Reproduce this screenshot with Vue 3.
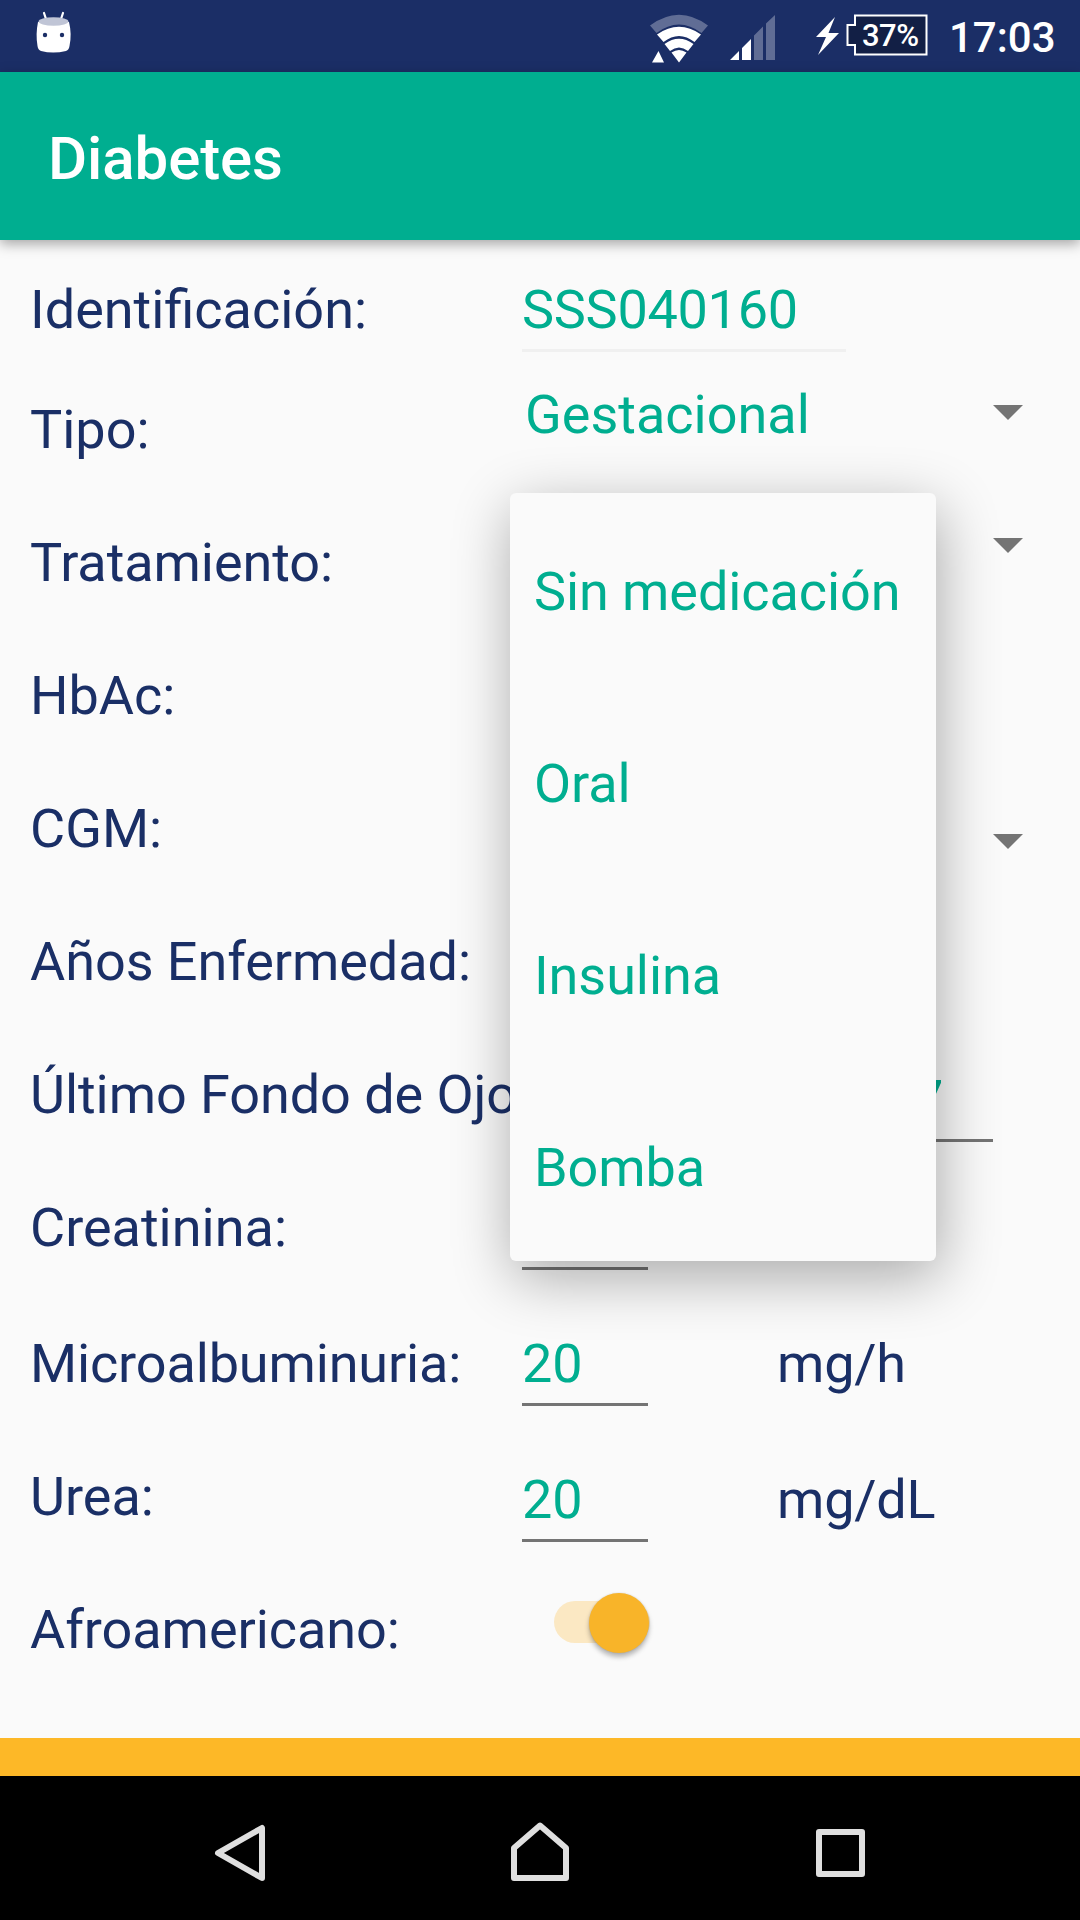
<script setup>
const rows = [
  { id: 'ident', label: 'Identificación:', value: 'SSS040160', type: 'input' },
  { id: 'tipo', label: 'Tipo:', value: 'Gestacional', type: 'select' },
  { id: 'trat', label: 'Tratamiento:', value: '', type: 'select' },
  { id: 'hbac', label: 'HbAc:', type: 'none' },
  { id: 'cgm', label: 'CGM:', value: '', type: 'select' },
  { id: 'anos', label: 'Años Enfermedad:', type: 'none' },
  { id: 'ojo', label: 'Último Fondo de Ojo:', value: '01/01/2017', type: 'input' },
  { id: 'crea', label: 'Creatinina:', value: '', type: 'input' },
  { id: 'micro', label: 'Microalbuminuria:', value: '20', unit: 'mg/h', type: 'input' },
  { id: 'urea', label: 'Urea:', value: '20', unit: 'mg/dL', type: 'input' },
  { id: 'afro', label: 'Afroamericano:', type: 'switch' },
]
const options = ['Sin medicación', 'Oral', 'Insulina', 'Bomba']
</script>

<template>
  <div class="screen">
    <header class="status">
      <svg class="cupcake" width="40" height="48" viewBox="0 0 40 48">
        <path d="M11 3l3 9M30 3l-3 9" stroke="#fff" stroke-width="2.200" fill="none" stroke-linecap="round" />
        <path d="M5 12Q2.500 24 4.500 36Q5 40 8 41Q20 44 33 41Q36 40 36.500 36Q39 24 36 12Z" fill="#fff" />
        <ellipse cx="20.500" cy="11.500" rx="15" ry="4.200" fill="#c0c5d6" />
        <circle cx="12" cy="25" r="2.200" fill="#1b2e66" /><circle cx="29" cy="25" r="2.200" fill="#1b2e66" />
      </svg>
      <span class="grow"></span>
      <svg class="wifi" width="60" height="50" viewBox="0 0 60 50">
        <path d="M0 11.500Q29 -10 58 11.500L51.500 19Q29 2 6.500 19Z" fill="#606d95" />
        <path d="M7 20.500Q29 5 51 20.500L44.500 28Q29 16 13.500 28Z M14.500 30Q29 19.500 43.500 30L38 37Q29 30 20 37Z M21.500 38.500Q29 33.500 36.500 38.500L29 48.500Z M2 48.500L8.500 37L14 48.500Z" fill="#fff" />
      </svg>
      <svg class="signal" width="46" height="46" viewBox="0 0 46 46">
        <path d="M0 45L9 36V45Z M12 45V33L21 24V45Z" fill="#fff" />
        <path d="M24 45V20.500L33 11.500V45Z M36 45V8.500L45 0V45Z" fill="#606d95" />
      </svg>
      <svg class="bolt" width="24" height="38" viewBox="0 0 24 38">
        <path d="M19 0L0 20H10L2 38L23 16H12.500Z" fill="#fff" />
      </svg>
      <div class="battery">
        <svg width="82" height="42" viewBox="0 0 82 42">
          <path d="M9 1.500H80.500V40.500H9V31H1.500V11H9Z" fill="#121f45" stroke="#fff" stroke-width="2" />
        </svg>
        <span class="percent">37%</span>
      </div>
      <span class="time">17:03</span>
    </header>

    <div class="appbar"><h1>Diabetes</h1></div>

    <main class="form">
      <div v-for="r in rows" :key="r.id" class="row" :class="r.id">
        <label>{{ r.label }}</label>
        <div v-if="r.type === 'input'" class="input">{{ r.value }}</div>
        <div v-else-if="r.type === 'select'" class="select">
          <span>{{ r.value }}</span>
          <svg class="arrow" width="30" height="15" viewBox="0 0 30 15"><path d="M0 0H30L15 15Z" fill="#747474" /></svg>
        </div>
        <div v-else-if="r.type === 'switch'" class="switch"><i class="thumb"></i></div>
        <span v-if="r.unit" class="unit">{{ r.unit }}</span>
      </div>
    </main>

    <div class="accent"></div>
    <nav class="nav">
      <svg width="60" height="64" viewBox="0 0 60 64"><path d="M8 32L52 7V57Z" /></svg>
      <svg width="60" height="64" viewBox="0 0 60 64"><path d="M4 27L30 4.500L56 27V57H4Z" /></svg>
      <svg width="60" height="64" viewBox="0 0 60 64"><path d="M9 11H52V53H9Z" /></svg>
    </nav>

    <ul class="popup">
      <li v-for="o in options" :key="o">{{ o }}</li>
    </ul>
  </div>
</template>

<style>
body { margin: 0; }
</style>

<style scoped>
.screen {
  position: relative;
  display: flex;
  flex-direction: column;
  width: 1080px;
  height: 1920px;
  overflow: hidden;
  background: #fafafa;
  color: #1a2f66;
  font: 400 54px/64px Roboto, sans-serif;
}
.status {
  display: flex;
  align-items: flex-start;
  height: 72px;
  box-sizing: border-box;
  background: #1b2e66;
  color: #fff;
}
.cupcake { margin: 10px 0 0 33px; }
.grow { flex: 1; }
.wifi { margin: 14px 20px 0 0; }
.signal { margin: 15px 40px 0 0; }
.bolt { margin: 17px 6px 0 0; }
.battery { position: relative; width: 82px; height: 42px; margin: 14px 21px 0 0; }
.battery svg { display: block; }
.percent { position: absolute; left: 16px; top: 1px; font: 500 31px/42px Roboto, sans-serif; letter-spacing: -0.5px; }
.time { width: 131px; font: 500 42px/50px Roboto, sans-serif; margin-top: 13px; }
.appbar {
  position: relative;
  display: flex;
  align-items: center;
  height: 168px;
  padding-left: 48px;
  background: #00ae90;
  box-shadow: 0 4px 12px rgba(0, 0, 0, 0.34);
}
h1 { margin: 6px 0 0; font: 500 60px/70px Roboto, sans-serif; letter-spacing: -0.1px; color: #fff; }
.form { flex: none; box-sizing: border-box; height: 1498px; padding: 38px 0 0 30px; }
.row { display: flex; align-items: flex-start; height: 133px; white-space: nowrap; }
.row label { flex: none; width: 492px; }
.ojo label, .anos label, .afro label, .trat label { letter-spacing: -0.07px; }
.micro label { letter-spacing: -0.14px; }
.ident { height: 120px; }
.crea { height: 136px; }
.input { box-sizing: border-box; width: 126px; height: 74px; border-bottom: 3px solid #747474; color: #00ae90; }
.ident .input { width: 324px; border-color: #f0f0f0; letter-spacing: -0.27px; }
.ojo .input { width: 337px; margin: 5px 0 0 134px; }
.urea .input, .urea .unit { margin-top: 3px; }
.unit { margin-left: 129px; letter-spacing: -0.2px; }
.select { display: flex; align-items: flex-start; justify-content: space-between; width: 501px; color: #00ae90; }
.select span { margin: -15px 0 0 3px; }
.arrow { margin-top: 7px; }
.cgm .arrow { margin-top: 37px; }
.switch {
  display: flex;
  justify-content: flex-end;
  align-items: center;
  width: 96px;
  height: 42px;
  margin: 3px 0 0 32px;
  border-radius: 21px;
  background: #fbe8c3;
}
.thumb { width: 60px; height: 60px; flex: none; margin: 1px 1px 0 0; border-radius: 50%; background: #f8b429; box-shadow: 0 4px 5px rgba(0, 0, 0, 0.28), 0 0 2px rgba(0, 0, 0, 0.15); }
.accent { height: 38px; flex: none; background: #fdb827; }
.nav { display: flex; justify-content: space-around; align-items: flex-start; height: 144px; padding: 45px 90px 0; box-sizing: border-box; background: #000; }
.nav path { fill: none; stroke: #dfdfdf; stroke-width: 6; stroke-linejoin: round; }
.popup {
  position: absolute;
  left: 510px;
  top: 493px;
  width: 426px;
  margin: 0;
  padding: 0;
  list-style: none;
  border-radius: 6px;
  background: #fafafa;
  color: #00ae90;
  box-shadow: 3px 16px 60px rgba(0, 0, 0, 0.33);
}
.popup li { height: 192px; box-sizing: border-box; padding: 67px 24px 0; white-space: nowrap; letter-spacing: -0.08px; }
</style>
